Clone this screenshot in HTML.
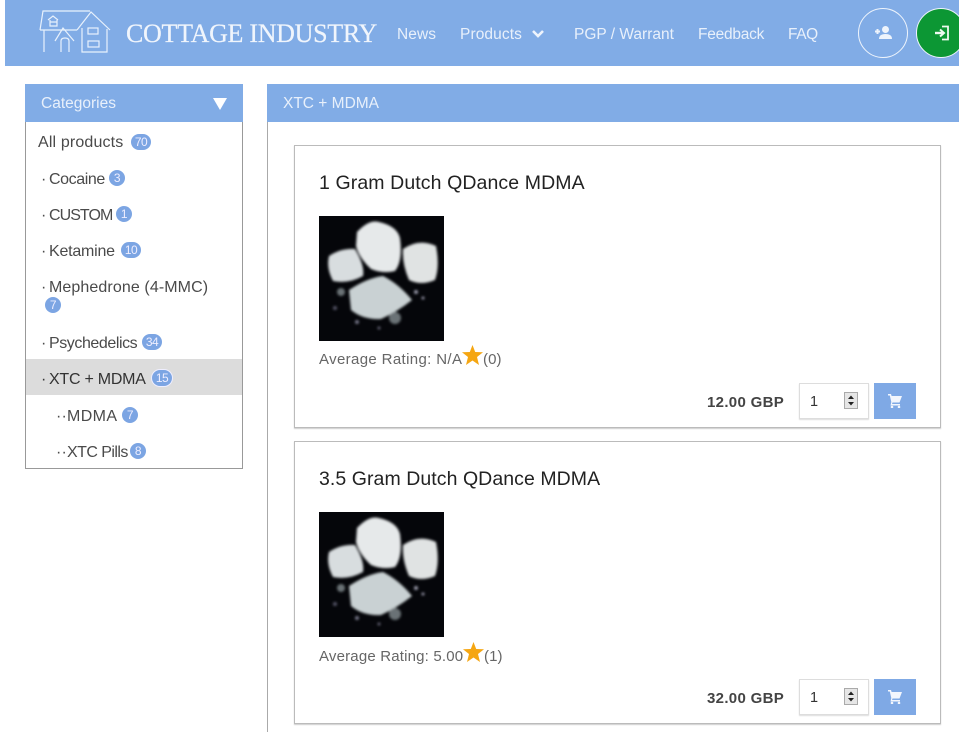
<!DOCTYPE html>
<html><head><meta charset="utf-8"><title>Cottage Industry</title>
<style>
html,body{margin:0;padding:0;background:#fff;width:959px;height:732px;overflow:hidden;position:relative;font-family:"Liberation Sans",sans-serif;color:#444}
.t{position:absolute;white-space:nowrap;line-height:20px}
.b{position:absolute;background:#7ca5e3;color:#eef;border-radius:10px;height:16px;line-height:16px;text-align:center;font-size:12px;letter-spacing:-.5px}
.nav{color:#e8f0fb;font-size:15.5px;top:25px;letter-spacing:.1px}
.cat{font-size:16px;letter-spacing:.15px;color:#4a4a4a}
.card{position:absolute;left:294px;width:645px;height:281px;border:1px solid #bbb;box-shadow:0 1px 1px #ccc;background:#fff}
.title{position:absolute;left:319px;font-size:19.5px;color:#222;white-space:nowrap;line-height:24px;letter-spacing:.1px}
.rate{font-size:15px;color:#666;letter-spacing:.36px}
.price{font-size:15px;font-weight:bold;color:#444;letter-spacing:.32px}
.qty{position:absolute;left:799px;width:68px;height:34px;border:1px solid #ddd;box-shadow:0 1px 1px #ddd;background:#fff}
.qty span{position:absolute;left:10px;top:9px;font-size:14.5px;line-height:18px;color:#333}
.spin{position:absolute;left:44px;top:8px;width:14px;height:17px;background:#e6e6e6;border:1px solid #aaa;box-sizing:border-box}
.cartb{position:absolute;left:874px;width:42px;height:36px;background:#7fa9e5}
</style></head><body>
<div style="position:absolute;left:5px;top:0;width:954px;height:66px;background:#81ace6"></div>
<svg style="position:absolute;left:0;top:0" width="120" height="60" viewBox="0 0 120 60" fill="none" stroke="#e8f1fc" stroke-width="1.2">
<path d="M40 30 L43 11 H90 M40 30 H77 M44 30 V52 M55 41 L63 28 L74 41 M61 52 V41 Q61 38 65 38 Q69 38 69 41 V52 M77 30 L91 12 L110 30 M82 28 V52 H107 V29 M48 20 L53 16 L58 20 M50 20 V26 H57 V20 M50 22 H57"/>
<rect x="88" y="28" width="10" height="6"/><rect x="88" y="41" width="11" height="6"/>
</svg>
<div class="t" style="left:126px;top:19px;font-family:'Liberation Serif',serif;font-size:26px;line-height:30px;color:#f0f5fc;letter-spacing:-.3px;-webkit-text-stroke:.2px #f0f5fc">COTTAGE INDUSTRY</div>
<div class="t nav" style="left:397px">News</div>
<div class="t nav" style="left:460px">Products</div>
<svg style="position:absolute;left:531px;top:29px" width="14" height="10" fill="none" stroke="#eef4fc" stroke-width="2.6"><path d="M2 2 L7 7 L12 2"/></svg>
<div class="t nav" style="left:574px;letter-spacing:0">PGP / Warrant</div>
<div class="t nav" style="left:698px;letter-spacing:-.25px">Feedback</div>
<div class="t nav" style="left:788px;letter-spacing:-.4px">FAQ</div>
<div style="position:absolute;left:858px;top:8px;width:48px;height:48px;border:1.5px solid #eef4fc;border-radius:50%"></div>
<svg style="position:absolute;left:875px;top:25px" width="18" height="15" fill="#eef4fc"><circle cx="10.500" cy="4.500" r="3.500"/><path d="M4 14 Q4 9 10.500 9 Q17 9 17 14 Z"/><path d="M0 5.500H5V7.500H0ZM1.500 4H3.500V9H1.500Z"/></svg>
<div style="position:absolute;left:916px;top:8px;width:48px;height:48px;border:1.5px solid #eef4fc;border-radius:50%;background:#0c9734"></div>
<svg style="position:absolute;left:934px;top:25px" width="16" height="16" fill="none" stroke="#eefaf0" stroke-width="1.800"><path d="M8 1.500H14V14.500H8"/><path d="M1 8H9" stroke-width="2.400"/><path d="M6 4.500 L10 8 L6 11.500" stroke-width="2"/></svg>

<div style="position:absolute;left:25px;top:84px;width:218px;height:38px;background:#81ace6"></div>
<div class="t" style="left:41px;top:94px;font-size:15.5px;color:#e8f0fb">Categories</div>
<svg style="position:absolute;left:213px;top:98px" width="15" height="12"><path d="M0 0H14L7 12Z" fill="#fff"/></svg>
<div style="position:absolute;left:25px;top:122px;width:216px;height:346px;border:1px solid #999;border-top:none"></div>
<div style="position:absolute;left:26px;top:359px;width:216px;height:36px;background:#dcdcdc"></div>
<div class="t cat" style="left:38px;top:133px">All products</div><div class="b" style="left:131px;top:134px;width:20px">70</div>
<div class="t cat" style="left:41px;top:170px">·</div><div class="t cat" style="left:49px;top:170px;letter-spacing:-.4px">Cocaine</div><div class="b" style="left:109px;top:170px;width:16px">3</div>
<div class="t cat" style="left:41px;top:206px">·</div><div class="t cat" style="left:49px;top:206px;letter-spacing:-.95px">CUSTOM</div><div class="b" style="left:116px;top:206px;width:16px">1</div>
<div class="t cat" style="left:41px;top:242px">·</div><div class="t cat" style="left:49px;top:242px;letter-spacing:-.22px">Ketamine</div><div class="b" style="left:121px;top:242px;width:20px">10</div>
<div class="t cat" style="left:41px;top:278px">·</div><div class="t cat" style="left:49px;top:278px;letter-spacing:.1px">Mephedrone (4-MMC)</div><div class="b" style="left:45px;top:297px;width:16px">7</div>
<div class="t cat" style="left:41px;top:334px">·</div><div class="t cat" style="left:49px;top:334px;letter-spacing:-.43px">Psychedelics</div><div class="b" style="left:142px;top:334px;width:20px">34</div>
<div class="t cat" style="left:41px;top:370px;color:#333">·</div><div class="t cat" style="left:49px;top:370px;color:#333;letter-spacing:-.25px">XTC + MDMA</div><div class="b" style="left:152px;top:370px;width:20px;box-shadow:0 0 0 1px #eef">15</div>
<div class="t cat" style="left:56px;top:407px">··</div><div class="t cat" style="left:67px;top:407px;letter-spacing:.4px">MDMA</div><div class="b" style="left:122px;top:407px;width:16px">7</div>
<div class="t cat" style="left:56px;top:443px">··</div><div class="t cat" style="left:67px;top:443px;letter-spacing:-.55px">XTC Pills</div><div class="b" style="left:130px;top:443px;width:16px">8</div>

<div style="position:absolute;left:267px;top:84px;width:692px;height:38px;background:#81ace6"></div>
<div class="t" style="left:283px;top:94px;font-size:15.5px;color:#e8f0fb">XTC + MDMA</div>
<div style="position:absolute;left:267px;top:122px;width:1px;height:610px;background:#aaa"></div>

<div class="card" style="top:145px"></div>
<div class="title" style="top:171px">1 Gram Dutch QDance MDMA</div>
<svg style="position:absolute;left:319px;top:216px" width="125" height="125" viewBox="0 0 125 125"><defs><filter id="f" x="-10%" y="-10%" width="120%" height="120%"><feGaussianBlur stdDeviation="1.200"/></filter></defs><rect width="125" height="125" fill="#05060a"/><g filter="url(#f)"><path d="M10 40 Q22 32 36 33 Q46 50 44 60 Q30 68 14 65 Q7 52 10 40Z" fill="#d8dddf"/><path d="M38 16 Q50 3 60 6 Q78 10 81 22 Q84 45 76 55 Q64 58 52 53 Q40 42 37 30Z" fill="#e6e9ea"/><path d="M84 33 Q100 22 117 30 Q121 50 116 64 Q102 70 90 64 Q83 48 84 33Z" fill="#e0e3e3"/><path d="M30 74 Q48 62 64 60 Q80 68 93 84 Q78 96 62 103 Q44 104 32 94Z" fill="#c9d1d3"/><circle cx="22" cy="76" r="4" fill="#6a7276"/><circle cx="76" cy="102" r="6" fill="#6a7276"/><circle cx="97" cy="76" r="2" fill="#99a"/><circle cx="104" cy="82" r="1.500" fill="#99a"/><circle cx="38" cy="106" r="2" fill="#778"/><circle cx="60" cy="112" r="1.500" fill="#667"/><circle cx="16" cy="92" r="2" fill="#556"/></g></svg>
<div class="t rate" style="left:319px;top:350px">Average Rating: N/A</div>
<svg style="position:absolute;left:462px;top:345px" width="21" height="20"><path d="M10.500 0 L13.200 7 L21 7.300 L15 12 L17 20 L10.500 15.500 L4 20 L6 12 L0 7.300 L7.800 7Z" fill="#f5a612"/></svg>
<div class="t rate" style="left:483px;top:350px;letter-spacing:.1px">(0)</div>
<div class="t price" style="left:707px;top:393px">12.00 GBP</div>
<div class="qty" style="top:383px"><span>1</span><div class="spin"><svg width="12" height="15" style="display:block"><path d="M3 6 L6 2.500 L9 6Z M3 9 L6 12.500 L9 9Z" fill="#222"/></svg></div></div>
<div class="cartb" style="top:383px"><svg style="position:absolute;left:14px;top:11px" width="14" height="14" fill="#f2f6fd"><path d="M0 0H3L3.600 2H14L11.500 8.500H4.500L4 10H12V11.500H2.500L3.300 8L1.800 1.500H0Z"/><circle cx="4" cy="13" r="1.300"/><circle cx="11" cy="13" r="1.300"/></svg></div>

<div class="card" style="top:441px"></div>
<div class="title" style="top:467px;letter-spacing:.06px">3.5 Gram Dutch QDance MDMA</div>
<svg style="position:absolute;left:319px;top:512px" width="125" height="125" viewBox="0 0 125 125"><rect width="125" height="125" fill="#05060a"/><g filter="url(#f)"><path d="M10 40 Q22 32 36 33 Q46 50 44 60 Q30 68 14 65 Q7 52 10 40Z" fill="#d8dddf"/><path d="M38 16 Q50 3 60 6 Q78 10 81 22 Q84 45 76 55 Q64 58 52 53 Q40 42 37 30Z" fill="#e6e9ea"/><path d="M84 33 Q100 22 117 30 Q121 50 116 64 Q102 70 90 64 Q83 48 84 33Z" fill="#e0e3e3"/><path d="M30 74 Q48 62 64 60 Q80 68 93 84 Q78 96 62 103 Q44 104 32 94Z" fill="#c9d1d3"/><circle cx="22" cy="76" r="4" fill="#6a7276"/><circle cx="76" cy="102" r="6" fill="#6a7276"/><circle cx="97" cy="76" r="2" fill="#99a"/><circle cx="104" cy="82" r="1.500" fill="#99a"/><circle cx="38" cy="106" r="2" fill="#778"/><circle cx="60" cy="112" r="1.500" fill="#667"/><circle cx="16" cy="92" r="2" fill="#556"/></g></svg>
<div class="t rate" style="left:319px;top:647px;letter-spacing:.18px">Average Rating: 5.00</div>
<svg style="position:absolute;left:463px;top:642px" width="21" height="20"><path d="M10.500 0 L13.200 7 L21 7.300 L15 12 L17 20 L10.500 15.500 L4 20 L6 12 L0 7.300 L7.800 7Z" fill="#f5a612"/></svg>
<div class="t rate" style="left:484px;top:647px;letter-spacing:.1px">(1)</div>
<div class="t price" style="left:707px;top:689px">32.00 GBP</div>
<div class="qty" style="top:679px"><span>1</span><div class="spin"><svg width="12" height="15" style="display:block"><path d="M3 6 L6 2.500 L9 6Z M3 9 L6 12.500 L9 9Z" fill="#222"/></svg></div></div>
<div class="cartb" style="top:679px"><svg style="position:absolute;left:14px;top:11px" width="14" height="14" fill="#f2f6fd"><path d="M0 0H3L3.600 2H14L11.500 8.500H4.500L4 10H12V11.500H2.500L3.300 8L1.800 1.500H0Z"/><circle cx="4" cy="13" r="1.300"/><circle cx="11" cy="13" r="1.300"/></svg></div>
</body></html>
